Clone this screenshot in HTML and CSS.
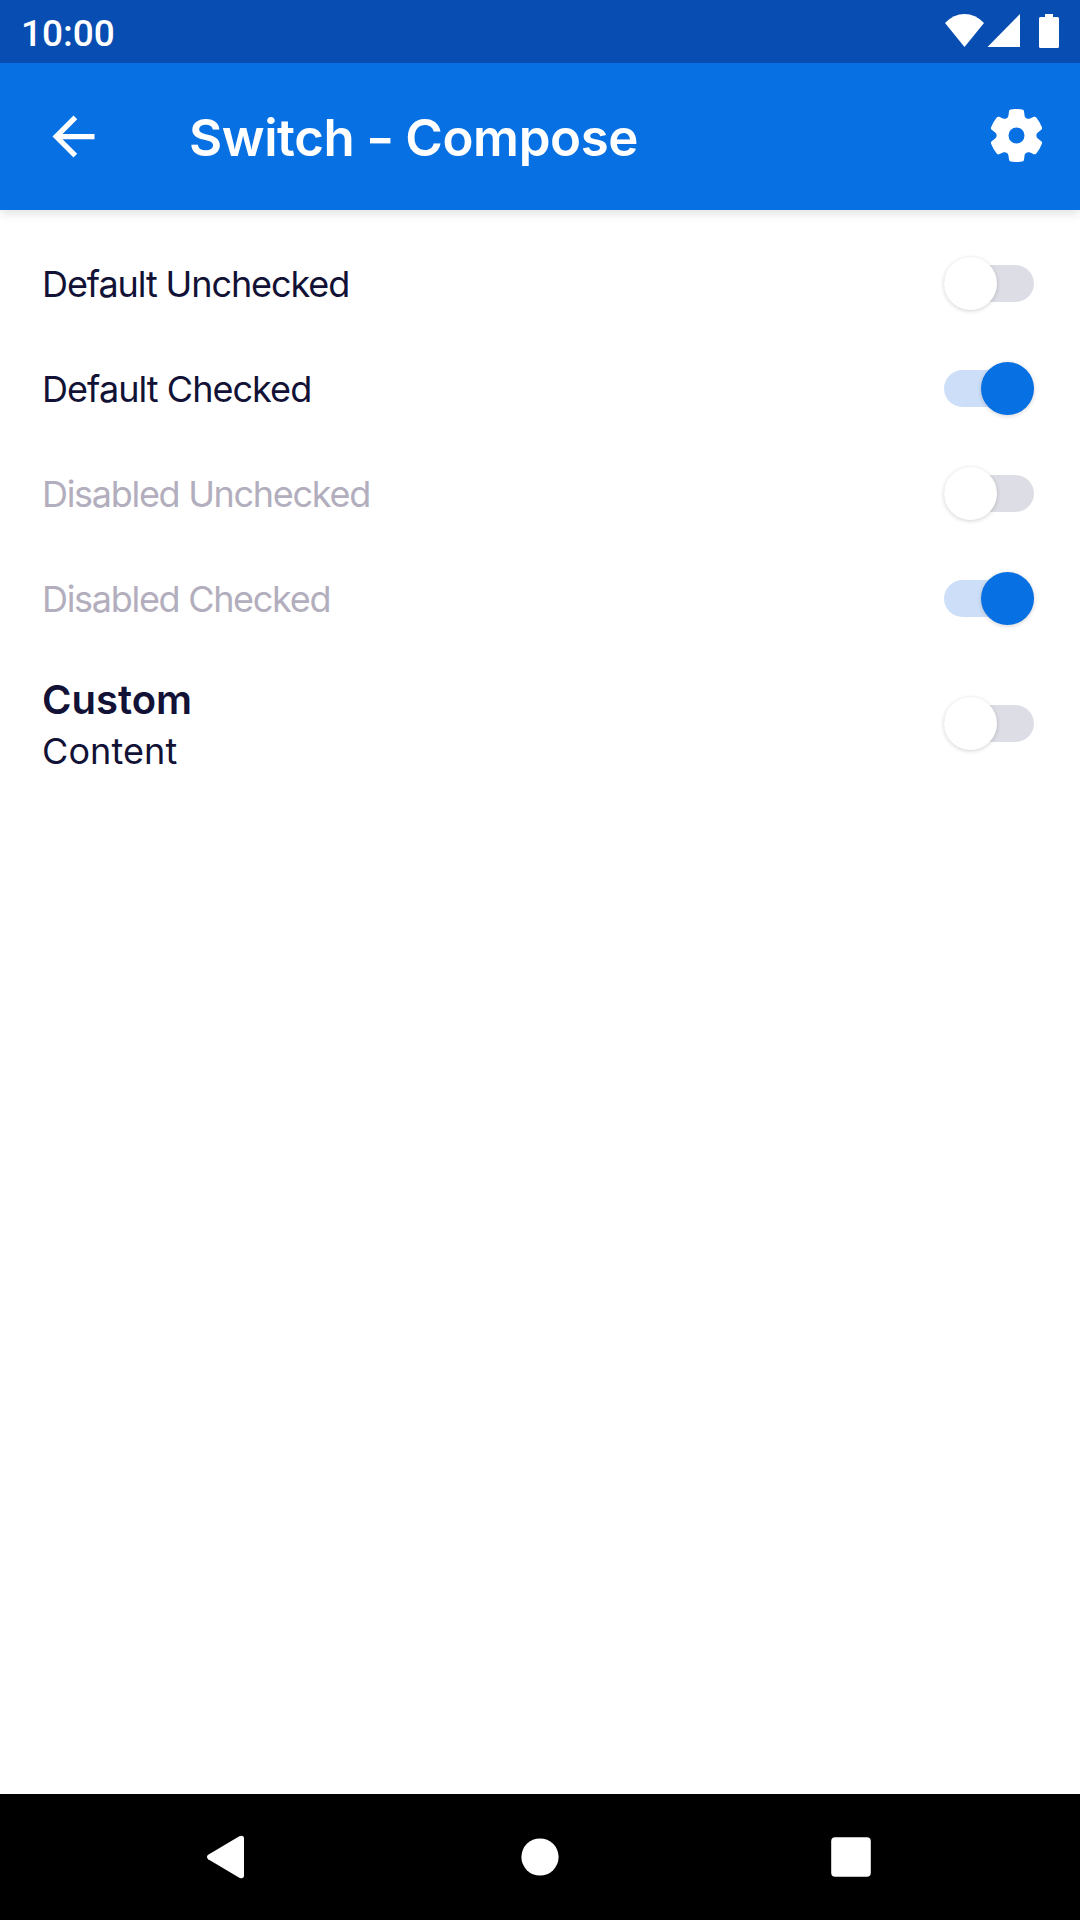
FILE: index.html
```html
<!DOCTYPE html>
<html lang="en">
<head>
<meta charset="utf-8">
<title>Switch - Compose</title>
<link rel="stylesheet" href="styles.css">
</head>
<body>
<div class="screen">
  <div class="status-bar">
    <span class="clock">10:00</span>
    <svg class="status-icons" viewBox="0 0 116 36" aria-hidden="true">
      <path d="M0 10Q8.500 1 19.500 1T39 10L19.500 34Z"/>
      <path d="M42.500 34L75 1V34Z"/>
      <path d="M100 1h8v3h4.500a1.500 1.500 0 0 1 1.500 1.500v28a1.500 1.500 0 0 1-1.500 1.500h-17a1.500 1.500 0 0 1-1.500-1.500v-28a1.500 1.500 0 0 1 1.500-1.500h4.500z"/>
    </svg>
  </div>

  <header class="app-bar">
    <svg class="back" viewBox="0 0 24 24" aria-hidden="true"><path d="M20 11H7.830l5.590-5.590L12 4l-8 8 8 8 1.410-1.410L7.830 13H20z"/></svg>
    <h1 class="title">Switch <span class="dash">-</span> Compose</h1>
    <svg class="settings" viewBox="-79.500 -79.500 159 159" aria-hidden="true">
      <defs>
        <path id="tooth" d="M-20 -34.600L-30 -51.800C-26.500 -53.500 -24.500 -56.500 -24 -61L-22.500 -73Q-22 -77.500 -17 -78.300Q0 -81 17 -78.300Q22 -77.500 22.500 -73L24 -61C24.500 -56.500 26.500 -53.500 30 -51.800L20 -34.600Z"/>
      </defs>
      <circle class="ring" r="41"/>
      <use href="#tooth"/>
      <use href="#tooth" transform="rotate(60)"/>
      <use href="#tooth" transform="rotate(120)"/>
      <use href="#tooth" transform="rotate(180)"/>
      <use href="#tooth" transform="rotate(240)"/>
      <use href="#tooth" transform="rotate(300)"/>
    </svg>
  </header>

  <main class="list">
    <div class="row"><span class="label">Default Unchecked</span><span class="switch"></span></div>
    <div class="row"><span class="label loose">Default Checked</span><span class="switch on"></span></div>
    <div class="row disabled"><span class="label">Disabled Unchecked</span><span class="switch"></span></div>
    <div class="row disabled"><span class="label">Disabled Checked</span><span class="switch on"></span></div>
    <div class="row custom">
      <div class="stack"><strong class="heading">Custom</strong><span class="label content">Content</span></div>
      <span class="switch"></span>
    </div>
  </main>

  <nav class="nav-bar">
    <svg class="nav-icon" viewBox="0 0 64 64" aria-hidden="true"><path d="M11.200 29.800L42.300 11.300Q46.500 9.500 47 13V51Q46.500 54.500 42.300 52.700L11.200 34.200Q8.600 32 11.200 29.800Z"/></svg>
    <svg class="nav-icon" viewBox="0 0 64 64" aria-hidden="true"><circle cx="32" cy="32" r="18.600"/></svg>
    <svg class="nav-icon" viewBox="0 0 64 64" aria-hidden="true"><rect x="12.200" y="12.200" width="39.600" height="39.600" rx="4"/></svg>
  </nav>
</div>
</body>
</html>
```
FILE: styles.css
```css
* { box-sizing: border-box; }

body {
  margin: 0;
  background: #fff;
  color: #111236;
  font-family: Inter, "Liberation Sans", sans-serif;
}

.screen {
  display: flex;
  flex-direction: column;
  width: 1080px;
  height: 1920px;
  overflow: hidden;
}

svg { display: block; flex: none; fill: #fff; }

.status-bar {
  display: flex;
  justify-content: space-between;
  flex: none;
  z-index: 1;
  height: 63px;
  padding: 13px 19px 0 21px;
  background: #084db2;
}

.clock {
  color: #fff;
  font: 500 37px/41px Roboto, sans-serif;
}

.status-icons { width: 116px; height: 36px; }

.app-bar {
  display: flex;
  align-items: center;
  flex: none;
  height: 147px;
  padding: 0 37px 0 42px;
  background: #0770e3;
  box-shadow: 0 3px 10px rgba(0, 0, 0, .13);
}

.back { width: 63px; height: 63px; }

.title {
  flex: 1;
  margin: 2px 0 0 84px;
  color: #fff;
  font-size: 51px;
  font-weight: 600;
  line-height: 60px;
  letter-spacing: -.4px;
  white-space: nowrap;
}

.dash {
  display: inline-block;
  width: 26px;
  text-align: center;
  transform: scaleX(1.22);
}

.settings { width: 53px; height: 53px; margin-bottom: 2px; }

.ring { fill: none; stroke: #fff; stroke-width: 34; }

.list { flex: 1; padding-top: 21px; }

.row {
  display: flex;
  align-items: center;
  justify-content: space-between;
  height: 105px;
  padding: 0 46px 0 42px;
}

.custom { height: 145px; }

.label {
  font-size: 36px;
  font-weight: 400;
  line-height: 48px;
  letter-spacing: -1.1px;
  white-space: nowrap;
}

.loose { letter-spacing: -.95px; }

.disabled .label { color: #b2aebd; letter-spacing: -1.3px; }

.stack { display: flex; flex-direction: column; padding-top: 2px; }

.heading { font-size: 40px; font-weight: 600; line-height: 52px; }

.content { padding-top: 1px; letter-spacing: .1px; }

.switch {
  display: flex;
  align-items: center;
  width: 90px;
  height: 37px;
  border-radius: 19px;
  background: #dddde5;
}

.switch::before {
  content: "";
  flex: none;
  width: 53px;
  height: 53px;
  border-radius: 50%;
  background: #fff;
  box-shadow: 0 1px 4px rgba(0, 0, 0, .18);
}

.switch.on { justify-content: flex-end; background: #cddff8; }
.switch.on::before { background: #0770e3; }

.nav-bar {
  display: grid;
  grid-template-columns: repeat(3, 311px);
  place-content: center;
  justify-items: center;
  flex: none;
  height: 126px;
  background: #000;
}

.nav-icon { width: 64px; height: 64px; }
```
